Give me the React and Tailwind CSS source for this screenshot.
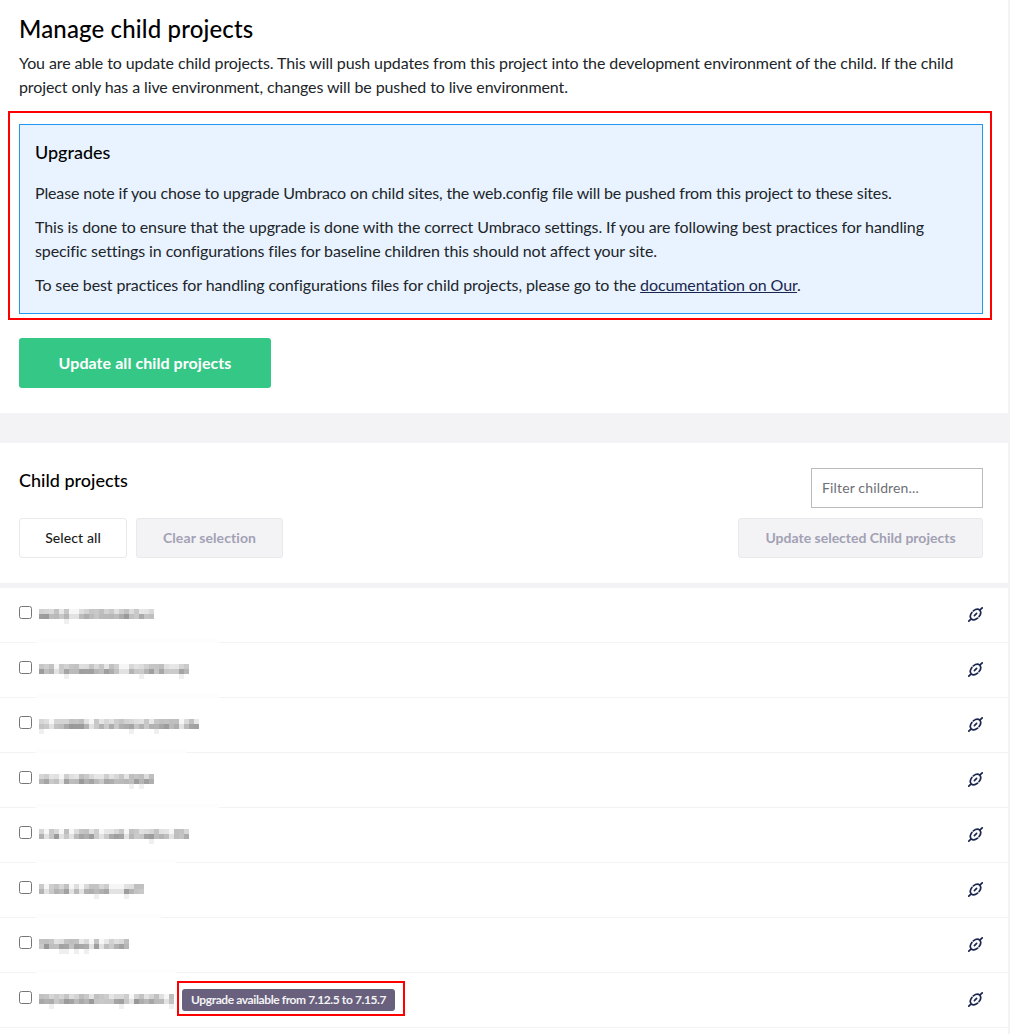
import React from 'react';

const LATO = "font-['Lato',_'Open_Sans',_sans-serif]";

// blurred project names: [width of the mosaic, seed, width of the smear over the divider]
const children = [
  { width: 115, seed: 3, smear: 0 },
  { width: 150, seed: 11, smear: 183 },
  { width: 160, seed: 17, smear: 183 },
  { width: 115, seed: 23, smear: 150 },
  { width: 150, seed: 29, smear: 183 },
  { width: 105, seed: 31, smear: 140 },
  { width: 90, seed: 37, smear: 125 },
  { width: 135, seed: 41, smear: 140, upgrade: 'Upgrade available from 7.12.5 to 7.15.7' },
];

const shade = (seed, x, y) => {
  const n = Math.sin(seed * 12.9898 + x * 78.233 + y * 37.719) * 43758.5453;
  return n - Math.floor(n);
};

// Mosaic of the names that are pixelated in the picture
const BlurredName = ({ width, seed }) => {
  const cols = Math.floor(width / 5);
  const cells = [];
  for (let x = 0; x < cols; x++) {
    const gap = shade(seed, x, 3) > 0.88;
    const top = gap ? 246 : Math.round(232 - shade(seed, x, 0) * 42);
    const bottom = gap ? 226 : Math.round(204 - shade(seed, x, 1) * 52);
    cells.push(<rect key={`t${x}`} x={x * 5} y={0} width={5} height={5} fill={`rgb(${top},${top},${top})`} />);
    cells.push(<rect key={`b${x}`} x={x * 5} y={5} width={5} height={5} fill={`rgb(${bottom},${bottom},${bottom})`} />);
    if (shade(seed, x, 2) > 0.88) {
      cells.push(<rect key={`d${x}`} x={x * 5} y={10} width={5} height={5} fill="#efefef" />);
    }
  }
  return (
    <svg width={cols * 5} height={15} className="block shrink-0">
      {cells}
    </svg>
  );
};

const UnlinkIcon = () => (
  <svg width="15" height="15" viewBox="0 0 15 15" fill="none" stroke="#1b264f" strokeWidth="1.7" strokeLinecap="round">
    <path d="M5.4 3.9C7.6 2.2 10.4 2 11.8 3.2C13 4.6 12.8 7.4 11.1 9.6" />
    <path d="M9.6 11.1C7.4 12.8 4.6 13 3.2 11.8C2 10.4 2.2 7.6 3.9 5.4" />
    <path d="M0.8 14.2L2.9 12.1" />
    <path d="M12.1 2.9L14.2 0.8" />
    <path d="M6.4 8.6L8.6 6.4" />
  </svg>
);

const ChildRow = ({ width, seed, smear, upgrade }) => (
  <div className="relative flex h-[55px] items-start border-b border-[#f3f3f5] pl-[19px] pr-[25px]">
    {smear > 0 && (
      <div className="absolute left-[36px] top-[-4px] h-[4px] bg-[#fdfdfd]" style={{ width: smear }} />
    )}
    <input type="checkbox" className="mt-[18px] h-[13px] w-[13px] shrink-0" />
    <div className="ml-[7px] mt-[21px]">
      <BlurredName width={width} seed={seed} />
    </div>
    {upgrade && (
      <span className="ml-[8px] mt-[16px] rounded-[3px] bg-[#68607c] px-[9px] py-[3px] text-[12px] font-bold leading-[16px] tracking-[-0.4px] text-[#f3f3f5]">
        {upgrade}
      </span>
    )}
    <div className="ml-auto mt-[19px]">
      <UnlinkIcon />
    </div>
  </div>
);

export default function App() {
  return (
    <div className={`${LATO} relative h-[1034px] w-[1010px] overflow-hidden bg-white text-[#212529]`}>
      <div className="w-[1008px]">
        {/* Manage section */}
        <section className="h-[413px] pl-[19px] pr-[25px] pt-[14px]">
          <h1 className="text-[24px] font-medium leading-[30px] tracking-[0.15px] text-black">Manage child projects</h1>
          <p className="mt-[7px] text-[16px] leading-[24px] tracking-[-0.105px]">
            You are able to update child projects. This will push updates from this project into the development environment of the child. If the child project only has a live environment, changes will be pushed to live environment.
          </p>
          <div className="mt-[25px] h-[190px] border border-[#2196f3] bg-[#e8f3ff] pl-[15px] pr-[15px] pt-[15px]">
            <h2 className="text-[18px] font-medium leading-[24px] text-black">Upgrades</h2>
            <p className="mt-[17px] text-[16px] leading-[24px] tracking-[-0.15px]">
              Please note if you chose to upgrade Umbraco on child sites, the web.config file will be pushed from this project to these sites.
            </p>
            <p className="mt-[10px] text-[16px] leading-[24px] tracking-[-0.1px]">
              This is done to ensure that the upgrade is done with the correct Umbraco settings. If you are following best practices for handling specific settings in configurations files for baseline children this should not affect your site.
            </p>
            <p className="mt-[10px] text-[16px] leading-[24px] tracking-[-0.11px]">
              To see best practices for handling configurations files for child projects, please go to the{' '}
              <a href="#" className="text-[#1b264f] underline">documentation on Our</a>.
            </p>
          </div>
          <button className="mt-[24px] h-[50px] w-[252px] rounded-[3px] bg-[#35c786] text-[16px] font-bold tracking-[0.07px] text-white">
            Update all child projects
          </button>
        </section>

        <div className="h-[30px] bg-[#f3f3f5]" />

        {/* Child projects toolbar */}
        <section className="flex h-[140px] justify-between pl-[19px] pr-[25px]">
          <div>
            <h2 className="mt-[25px] text-[18px] font-medium leading-[24px] text-black">Child projects</h2>
            <div className="mt-[26px] flex gap-[9px]">
              <button className="h-[40px] w-[108px] rounded-[3px] border border-[#e9e9eb] bg-white pb-[2px] text-[14px] font-medium tracking-[0.1px] text-[#1b1b1b]">
                Select all
              </button>
              <button className="h-[40px] w-[147px] rounded-[3px] border border-[#e9e9eb] bg-[#f3f3f5] pb-[2px] text-[14px] font-bold tracking-[0.1px] text-[#a2a1b4]">
                Clear selection
              </button>
            </div>
          </div>
          <div className="flex flex-col items-end">
            <input
              placeholder="Filter children..."
              className="mt-[25px] h-[40px] w-[172px] border border-[#bbbabf] px-[10px] pb-[2px] text-[14px] tracking-[0.15px] outline-none placeholder:text-[#6f6f76]"
            />
            <button className="mt-[10px] h-[40px] w-[245px] rounded-[3px] border border-[#e9e9eb] bg-[#f3f3f5] pb-[2px] text-[14px] font-bold text-[#a2a1b4]">
              Update selected Child projects
            </button>
          </div>
        </section>

        <div className="h-[5px] bg-[#f3f3f5]" />

        {children.map((child) => (
          <ChildRow key={child.seed} {...child} />
        ))}
      </div>

      {/* page edge */}
      <div className="absolute bottom-0 right-0 top-0 w-[2px] bg-[#f3f3f5]" />

      {/* red annotations */}
      <div className="absolute left-[8px] top-[111px] h-[209px] w-[984px] border-2 border-[#ff0000]" />
      <div className="absolute left-[177px] top-[981px] h-[35px] w-[228px] border-2 border-[#ff0000]" />
    </div>
  );
}
